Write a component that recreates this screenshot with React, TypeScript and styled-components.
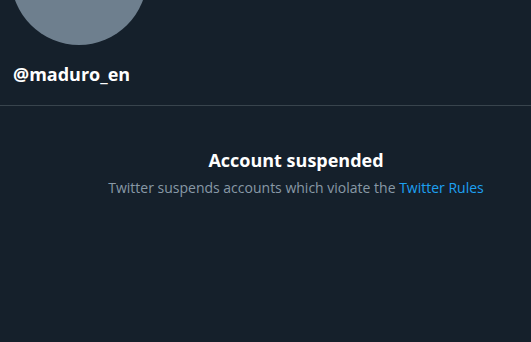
import React from "react";
import styled, { createGlobalStyle } from "styled-components";

const Global = createGlobalStyle`
  html, body { margin: 0; padding: 0; background: #15202b; }
  body { font-family: "Open Sans", "Noto Sans", sans-serif; overflow: hidden; }
`;

const Page = styled.div`
  width: 531px;
  height: 342px;
  background: #15202b;
  display: flex;
  flex-direction: column;
  overflow: hidden;
`;

const Header = styled.div`
  display: flex;
  flex-direction: column;
  padding: 0 13px;
  border-bottom: 1px solid #38444d;
  height: 106px;
  box-sizing: border-box;
`;

const Avatar = styled.div`
  width: 136px;
  height: 136px;
  border-radius: 50%;
  background: #6e7f8e;
  margin-top: -91px;
  margin-left: -2px;
`;

const Handle = styled.div`
  margin-top: 17px;
  color: #ffffff;
  font-weight: 700;
  font-size: 18px;
  line-height: 24px;
`;

const Message = styled.div`
  display: flex;
  flex-direction: column;
  align-items: center;
  padding-left: 61px;
  padding-top: 42px;
`;

const Title = styled.div`
  color: #ffffff;
  font-weight: 700;
  font-size: 18px;
  line-height: 24px;
`;

const Sub = styled.div`
  margin-top: 6px;
  color: #8899a6;
  font-size: 14px;
  line-height: 20px;
`;

const Link = styled.a`
  color: #1da1f2;
  text-decoration: none;
`;

export default function App() {
  return (
    <Page>
      <Global />
      <Header>
        <Avatar />
        <Handle>@maduro_en</Handle>
      </Header>
      <Message>
        <Title>Account suspended</Title>
        <Sub>
          Twitter suspends accounts which violate the <Link href="#">Twitter Rules</Link>
        </Sub>
      </Message>
    </Page>
  );
}
